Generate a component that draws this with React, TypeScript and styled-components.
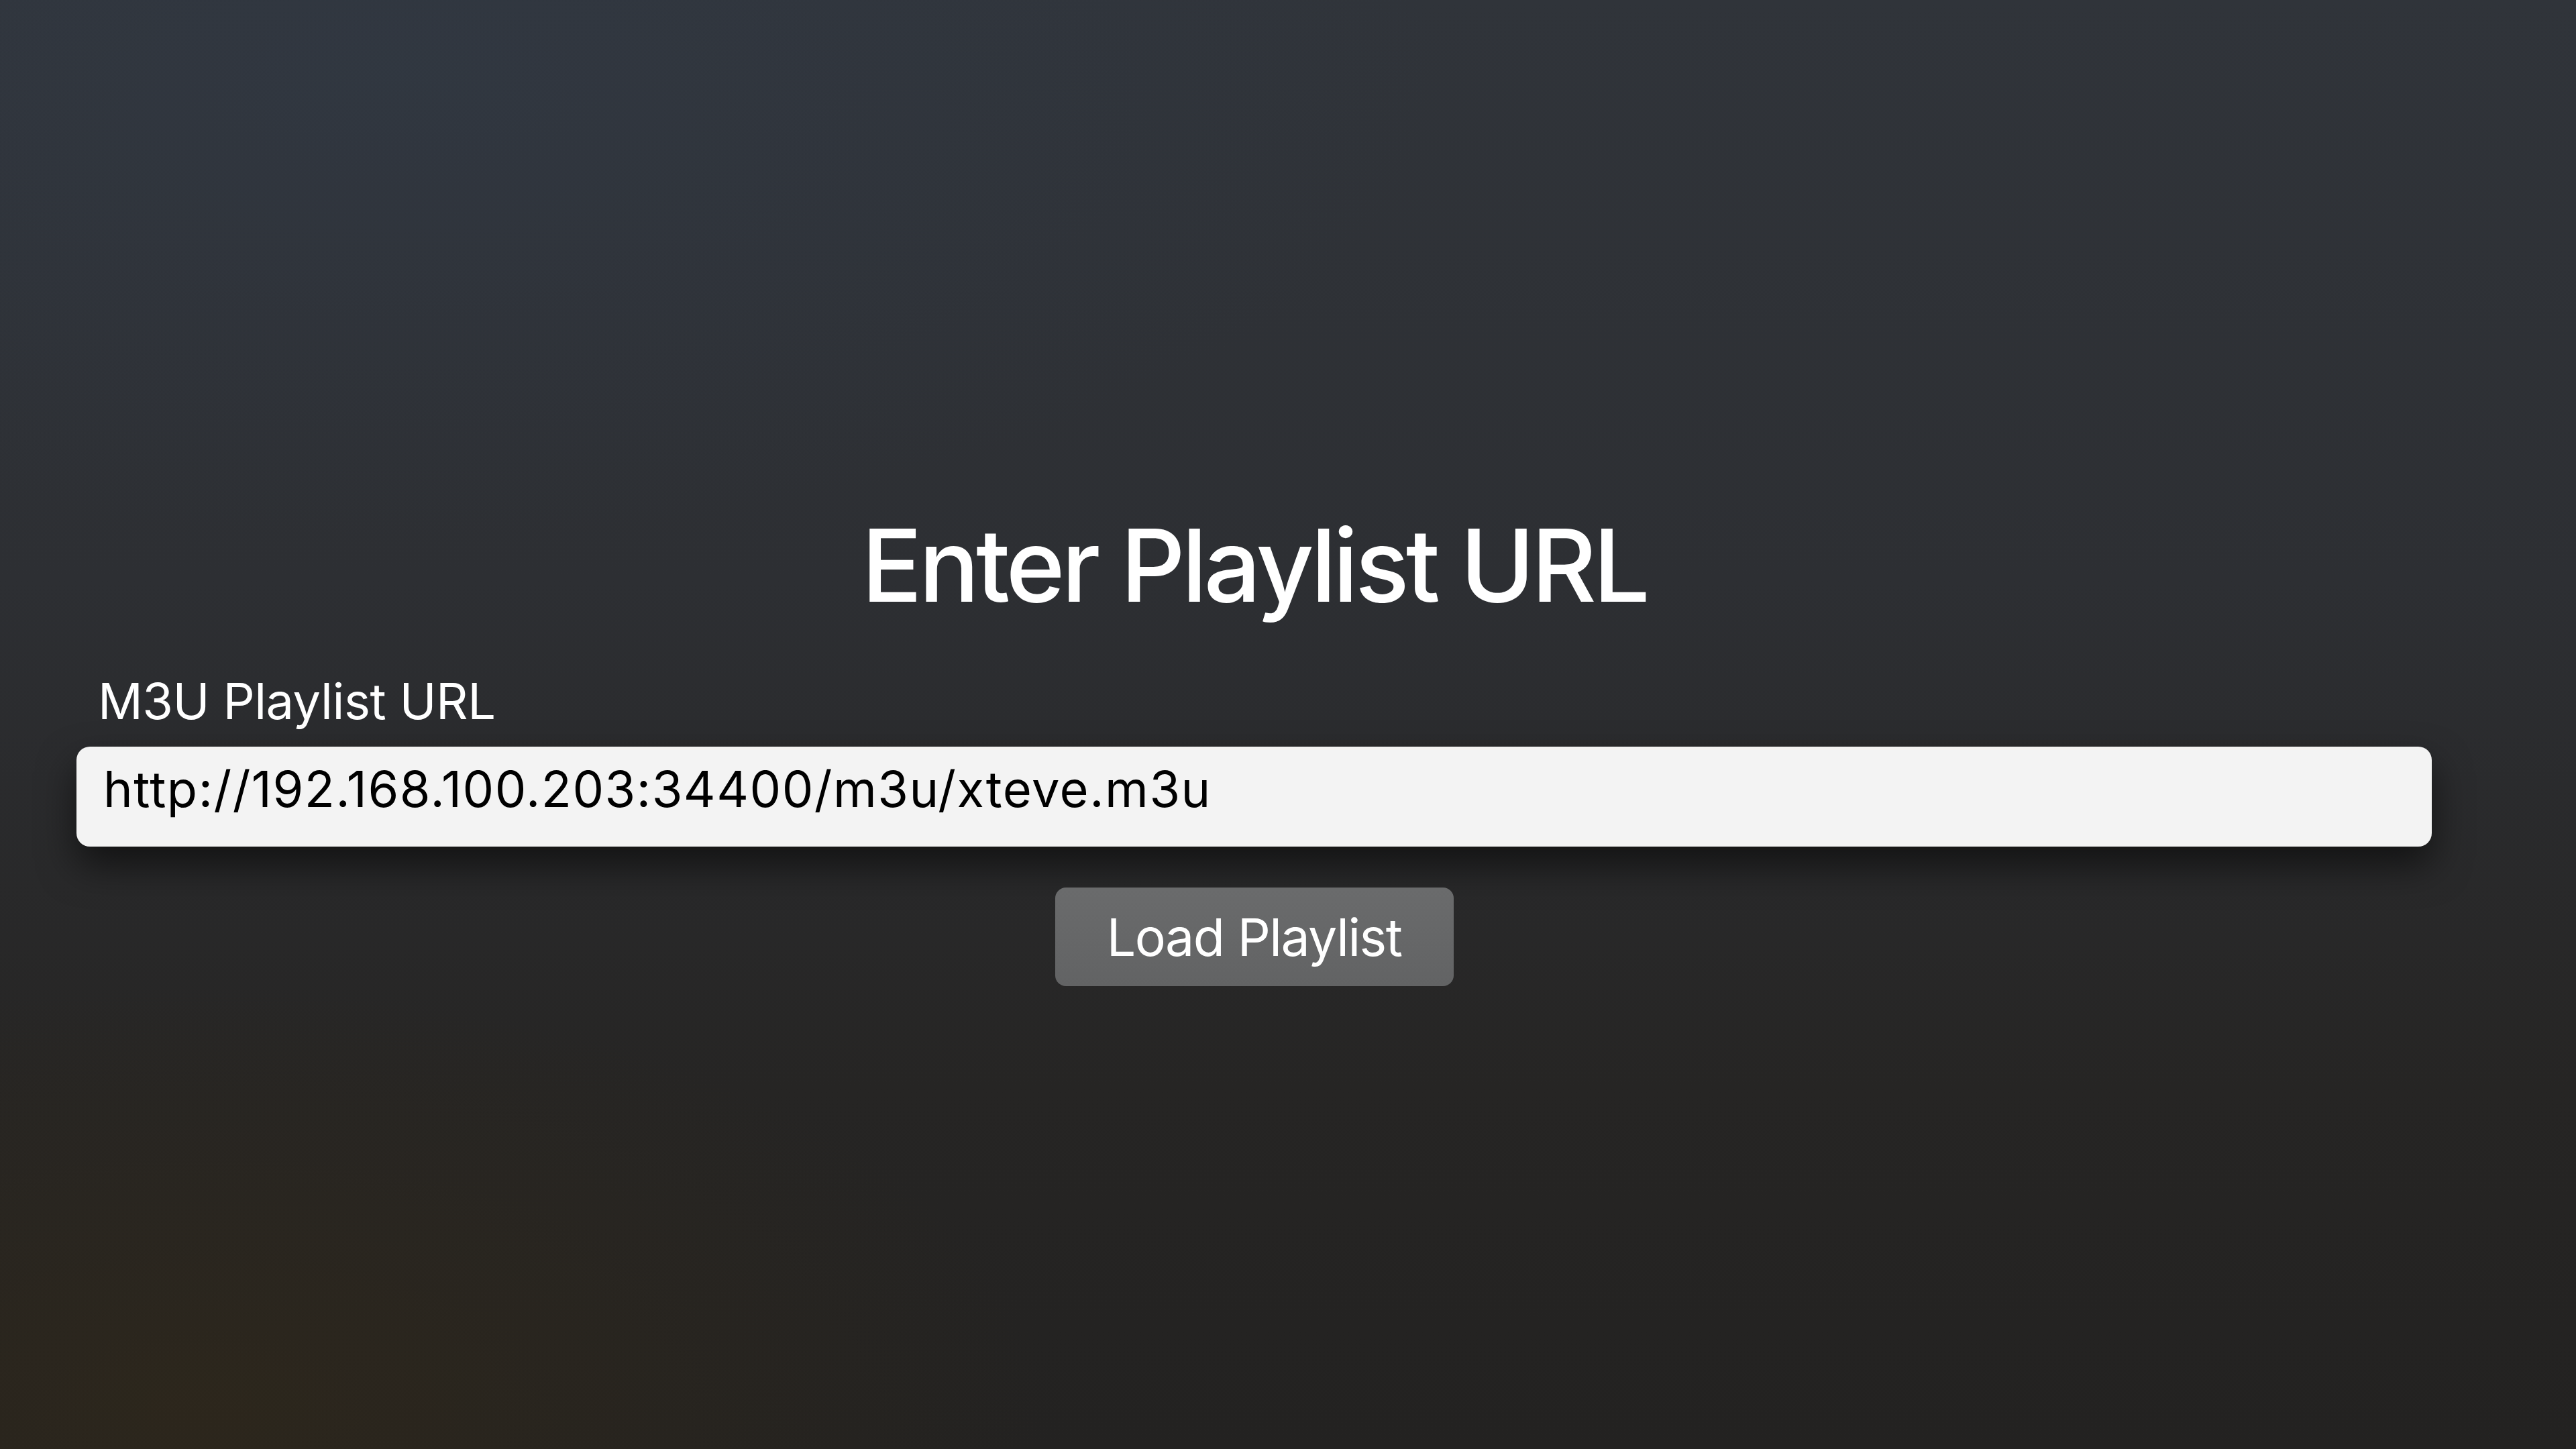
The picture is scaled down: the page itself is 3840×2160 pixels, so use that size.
import { useState } from "react"
import styled, { createGlobalStyle } from "styled-components"

const GlobalStyle = createGlobalStyle`
    html, body {
        margin: 0;
        padding: 0;
        height: 100%;
    }
    body {
        font-family: Inter, "Noto Sans", sans-serif;
        background: #2a2b2d;
    }
    #root {
        height: 100%;
    }
`

const Screen = styled.div`
    width: 3840px;
    height: 2160px;
    box-sizing: border-box;
    padding: 768px 215px 0 114px;
    display: flex;
    flex-direction: column;
    align-items: stretch;
    background:
        radial-gradient(ellipse 1800px 900px at 300px 2100px, rgba(52, 42, 24, 0.55), transparent 70%),
        radial-gradient(ellipse 2200px 1000px at 600px 100px, rgba(50, 60, 74, 0.45), transparent 70%),
        linear-gradient(180deg, #30343a 0%, #2d2f33 40%, #262524 75%, #232221 100%);
    overflow: hidden;
`

const Title = styled.h1`
    margin: 0;
    font-size: 150px;
    line-height: 1;
    font-weight: 500;
    letter-spacing: -5px;
    color: #ffffff;
    text-align: center;
`

const Field = styled.label`
    display: flex;
    flex-direction: column;
    margin-top: 90px;
`

const FieldLabel = styled.span`
    font-size: 74px;
    line-height: 1;
    font-weight: 400;
    letter-spacing: -0.5px;
    color: #ffffff;
    padding-left: 32px;
    margin-bottom: 31px;
`

const UrlInput = styled.input`
    height: 149px;
    box-sizing: border-box;
    padding: 0 40px 24px;
    border: none;
    border-radius: 20px;
    background: #f3f3f3;
    color: #000000;
    font-family: Inter, "Noto Sans", sans-serif;
    font-size: 74px;
    font-weight: 400;
    letter-spacing: 1.5px;
    box-shadow: 0 28px 56px rgba(0, 0, 0, 0.55);
    outline: none;
`

const LoadButton = styled.button`
    align-self: center;
    margin-top: 61px;
    width: 594px;
    height: 147px;
    border: none;
    border-radius: 16px;
    background: linear-gradient(180deg, #6a6b6c 0%, #626364 100%);
    color: #ffffff;
    font-family: Inter, "Noto Sans", sans-serif;
    font-size: 77px;
    font-weight: 400;
    letter-spacing: -1.5px;
    cursor: pointer;
`

export default function App() {
    const [url, setUrl] = useState("http://192.168.100.203:34400/m3u/xteve.m3u")
    return (
        <>
            <GlobalStyle />
            <Screen>
                <Title>Enter Playlist URL</Title>
                <Field>
                    <FieldLabel>M3U Playlist URL</FieldLabel>
                    <UrlInput value={url} onChange={(e) => setUrl(e.target.value)} />
                </Field>
                <LoadButton>Load Playlist</LoadButton>
            </Screen>
        </>
    )
}
